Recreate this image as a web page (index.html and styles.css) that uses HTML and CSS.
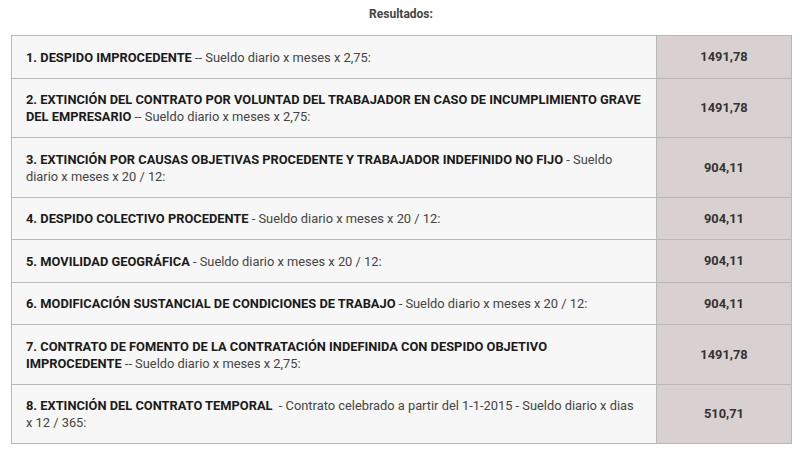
FILE: index.html
```html
<!DOCTYPE html>
<html lang="es">
<head>
<meta charset="utf-8">
<title>Resultados</title>
<link rel="stylesheet" href="styles.css">
</head>
<body>
<div class="page">
  <h3 class="title">Resultados:</h3>
  <table class="results">
    <tr><td class="desc"><b>1. DESPIDO IMPROCEDENTE</b> -- Sueldo diario x meses x 2,75:</td><td class="val">1491,78</td></tr>
    <tr><td class="desc"><b>2. EXTINCIÓN DEL CONTRATO POR VOLUNTAD DEL TRABAJADOR EN CASO DE INCUMPLIMIENTO GRAVE DEL EMPRESARIO</b> -- Sueldo diario x meses x 2,75:</td><td class="val">1491,78</td></tr>
    <tr><td class="desc"><b>3. EXTINCIÓN POR CAUSAS OBJETIVAS PROCEDENTE Y TRABAJADOR INDEFINIDO NO FIJO</b> - Sueldo diario x meses x 20 / 12:</td><td class="val">904,11</td></tr>
    <tr><td class="desc"><b>4. DESPIDO COLECTIVO PROCEDENTE</b> - Sueldo diario x meses x 20 / 12:</td><td class="val">904,11</td></tr>
    <tr><td class="desc"><b>5. MOVILIDAD GEOGRÁFICA</b> - Sueldo diario x meses x 20 / 12:</td><td class="val">904,11</td></tr>
    <tr><td class="desc"><b>6. MODIFICACIÓN SUSTANCIAL DE CONDICIONES DE TRABAJO</b> - Sueldo diario x meses x 20 / 12:</td><td class="val">904,11</td></tr>
    <tr><td class="desc"><b>7. CONTRATO DE FOMENTO DE LA CONTRATACIÓN INDEFINIDA CON DESPIDO OBJETIVO IMPROCEDENTE</b> -- Sueldo diario x meses x 2,75:</td><td class="val">1491,78</td></tr>
    <tr><td class="desc"><b>8. EXTINCIÓN DEL CONTRATO TEMPORAL</b>&nbsp; - Contrato celebrado a partir del 1-1-2015 - Sueldo diario x dias x 12 / 365:</td><td class="val">510,71</td></tr>
  </table>
</div>
</body>
</html>
```
FILE: styles.css
```css
html, body {
  margin: 0;
  padding: 0;
  background: #ffffff;
}
body {
  font-family: Roboto, "Liberation Sans", sans-serif;
  color: #333;
}
.page {
  padding: 0 9px 0 11px;
}
.title {
  margin: 0;
  height: 35px;
  padding-top: 6px;
  box-sizing: border-box;
  text-align: center;
  font-size: 12px;
  font-weight: bold;
  color: #444;
  line-height: 16px;
}
.results {
  width: 781px;
  border-collapse: collapse;
  border: 1px solid #b0b0b0;
}
.results td {
  border: 1px solid #b8b8b8;
  font-size: 12.85px;
  line-height: 17px;
  vertical-align: middle;
}
.desc {
  background: #f7f7f7;
  color: #444;
  padding: 12.5px 13.5px 12px 14px;
}
.desc b {
  color: #1a1a1a;
  font-weight: bold;
}
.val {
  width: 134px;
  background: #d9d1d1;
  text-align: center;
  font-weight: bold;
  color: #333;
  padding: 0;
}
```
